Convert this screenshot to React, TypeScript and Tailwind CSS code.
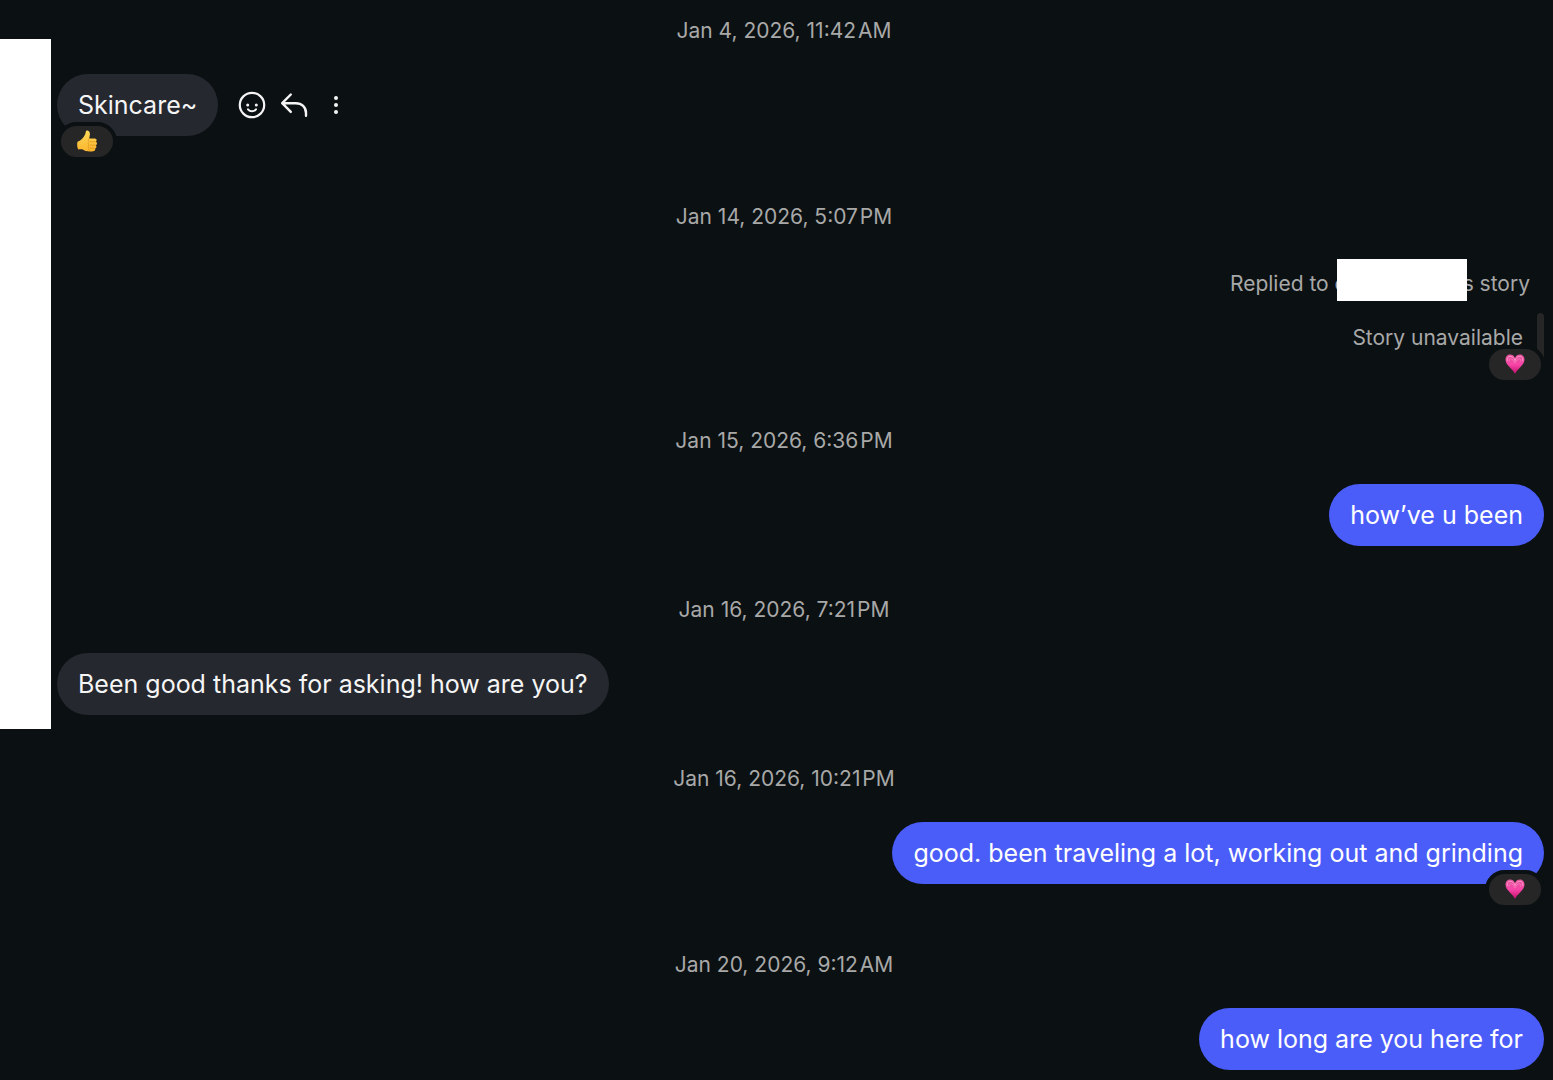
import type { ReactNode } from "react";

type Reaction = "thumbs" | "heart";

type Message = {
  id: string;
  date: string;
  from: "me" | "them";
  text?: string;
  storyReply?: boolean;
  reaction?: Reaction;
  showActions?: boolean;
};

const messages: Message[] = [
  {
    id: "1",
    date: "Jan 4, 2026, 11:42\u200aAM",
    from: "them",
    text: "Skincare~",
    reaction: "thumbs",
    showActions: true,
  },
  {
    id: "2",
    date: "Jan 14, 2026, 5:07\u200aPM",
    from: "me",
    storyReply: true,
    reaction: "heart",
  },
  {
    id: "3",
    date: "Jan 15, 2026, 6:36\u200aPM",
    from: "me",
    text: "how’ve u been",
  },
  {
    id: "4",
    date: "Jan 16, 2026, 7:21\u200aPM",
    from: "them",
    text: "Been good thanks for asking! how are you?",
  },
  {
    id: "5",
    date: "Jan 16, 2026, 10:21\u200aPM",
    from: "me",
    text: "good. been traveling a lot, working out and grinding",
    reaction: "heart",
  },
  {
    id: "6",
    date: "Jan 20, 2026, 9:12\u200aAM",
    from: "me",
    text: "how long are you here for",
  },
];

function ThumbsUp() {
  return (
    <svg viewBox="0 0 22 22" className="size-[22px]" aria-hidden="true">
      <defs>
        <linearGradient id="thumb" x1="0" y1="0" x2="0" y2="1">
          <stop offset="0" stopColor="#ffd95a" />
          <stop offset="1" stopColor="#fbb52c" />
        </linearGradient>
      </defs>
      <path
        d="M1.500 11.700C3.900 10.900 5.900 9.200 7.200 7.400c1.400-1.800 2.400-3.400 2.500-5.200.1-1.300.7-1.900 1.700-1.800 1.700.2 2.700 1.900 2.500 4.200-.1 1.500-.5 2.700-.8 3.800h5.500c1.200 0 2 .8 2 1.800 0 .7-.3 1.200-.8 1.500.8.300 1.200 1 1.200 1.800 0 .9-.5 1.500-1.200 1.800.5.300.7.900.6 1.600-.1.900-.7 1.500-1.400 1.600.3.300.3.700.2 1.100-.2 1-.9 1.500-1.900 1.600-2.400.4-5.100.4-7.400-.1-1.700-.4-2.600-1.500-4.200-1.800-1.100-.2-2.300 0-3.400.1C1 17.600.9 13.700 1.500 11.700Z"
        fill="url(#thumb)"
      />
      <path
        d="M14.200 11.700h5M14.200 15.100h5.200M14.200 18.200h4.200M13.200 8.400c-1 .8-1.200 2.300-.4 3.200-.8.900-.8 2.400 0 3.300-.8.900-.7 2.200.2 3-.4.800-.3 1.700.2 2.500"
        fill="none"
        stroke="#dd9218"
        strokeWidth=".7"
        strokeLinecap="round"
      />
    </svg>
  );
}

function Heart() {
  return (
    <svg viewBox="0 0 22 22" className="size-[22px]" aria-hidden="true">
      <defs>
        <linearGradient id="heart" x1="0" y1="0" x2="0" y2="1">
          <stop offset="0" stopColor="#e0559a" />
          <stop offset=".5" stopColor="#f747a8" />
          <stop offset="1" stopColor="#c4106f" />
        </linearGradient>
      </defs>
      <path
        d="M11 20.800C10.200 19 8.200 16.900 5.900 14.500 3.500 12 1.500 9.600 1.500 6.600c0-3 2-5 4.700-5 2.200 0 3.900 1.200 4.800 3.300.9-2.100 2.600-3.300 4.800-3.300 2.700 0 4.700 2 4.700 5 0 3-2 5.400-4.400 7.900-2.300 2.400-4.300 4.500-5.100 6.300Z"
        fill="url(#heart)"
      />
      <path
        d="M3.200 7.600c-.4-2.600.9-4.300 2.900-4.300 2.300 0 3.900 1.600 4.900 4.200 1-2.600 2.600-4.200 4.900-4.200 2 0 3.300 1.700 2.900 4.300"
        fill="none"
        stroke="#ff9ccb"
        strokeWidth=".9"
        strokeLinecap="round"
      />
      <path
        d="M5.200 8.200c-.2-1.500.3-2.500 1.300-2.500 1.700 0 3.300 1.900 4.500 4.200 1.200-2.300 2.800-4.200 4.500-4.200 1 0 1.500 1 1.300 2.500"
        fill="none"
        stroke="#ff86c2"
        strokeWidth=".7"
        strokeLinecap="round"
      />
    </svg>
  );
}

function ReactionPill({ reaction, side }: { reaction: Reaction; side: string }) {
  return (
    <button
      type="button"
      aria-label={`${reaction} reaction`}
      className={`absolute -bottom-[25px] flex h-[39px] w-[60px] items-center justify-center rounded-full border-4 border-[#0b1012] bg-[#262626] pb-0.5 ${side}`}
    >
      {reaction === "thumbs" ? <ThumbsUp /> : <Heart />}
    </button>
  );
}

function IconButton({ label, children }: { label: string; children: ReactNode }) {
  return (
    <button
      type="button"
      aria-label={label}
      className="flex size-[42px] items-center justify-center text-[#f5f5f5]"
    >
      {children}
    </button>
  );
}

function Actions() {
  return (
    <div className="ml-[13px] flex items-center">
      <IconButton label="React">
        <svg viewBox="0 0 28 28" className="size-7" fill="none" stroke="currentColor">
          <circle cx="14" cy="14" r="12.200" strokeWidth="2.200" />
          <circle cx="9.700" cy="14" r="1.500" fill="currentColor" stroke="none" />
          <circle cx="18.300" cy="14" r="1.500" fill="currentColor" stroke="none" />
          <path d="M10 18.300c1 1.300 2.400 1.900 4 1.900s3-.6 4-1.900" strokeWidth="2" strokeLinecap="round" />
        </svg>
      </IconButton>
      <IconButton label="Reply">
        <svg
          viewBox="0 0 28 28"
          className="size-7"
          fill="none"
          stroke="currentColor"
          strokeWidth="2.400"
          strokeLinecap="round"
          strokeLinejoin="round"
        >
          <path d="M10.800 3.500 2.200 12.200l8.600 8.700M2.200 12.200h13.600c6 0 10.200 4 10.200 9.800v2.800" />
        </svg>
      </IconButton>
      <IconButton label="More options">
        <svg viewBox="0 0 28 28" className="size-7" fill="currentColor">
          <circle cx="14" cy="7" r="2" />
          <circle cx="14" cy="14" r="2" />
          <circle cx="14" cy="21" r="2" />
        </svg>
      </IconButton>
    </div>
  );
}

function StoryReply({ children }: { children: ReactNode }) {
  return (
    <div className="-mt-px flex flex-col items-end text-[21px] leading-7 text-[#a8a8a8]">
      <div className="mr-3.5 flex items-end">
        <span className="pb-[3px]">Replied to c</span>
        {/* redacted username */}
        <span className="z-10 -ml-2.5 -mr-1 h-[42px] w-[130px] bg-white" />
        <span className="pb-[3px]">s story</span>
      </div>
      <div className="relative mt-3 flex h-[46px]">
        <span className="mr-3.5 pt-[11px]">Story unavailable</span>
        <span className="w-[7px] rounded-full bg-[#262626]" />
        {children}
      </div>
    </div>
  );
}

function MessageRow({ message }: { message: Message }) {
  const mine = message.from === "me";

  return (
    <li className={message.reaction ? "mb-[17px]" : ""}>
      <p className="pb-[29px] pr-9 text-center text-[21px] leading-7 text-[#a8a8a8]">
        {message.date}
      </p>
      {message.storyReply ? (
        <div className="pb-px pr-[9px]">
          <StoryReply>
            {message.reaction && (
              <ReactionPill reaction={message.reaction} side="-right-px" />
            )}
          </StoryReply>
        </div>
      ) : (
        <div className={`flex items-center pl-1.5 pr-[9px] ${mine ? "justify-end" : ""}`}>
          <div
            className={`relative rounded-[31px] px-[21px] py-[14px] text-[25px] leading-[34px] ${
              mine ? "bg-[#4a5df9] text-white" : "bg-[#25282f] text-[#f5f5f5]"
            }`}
          >
            {message.text}
            {message.reaction && (
              <ReactionPill
                reaction={message.reaction}
                side={mine ? "-right-px" : "left-0"}
              />
            )}
          </div>
          {message.showActions && <Actions />}
        </div>
      )}
    </li>
  );
}

export default function App() {
  return (
    <main className="flex min-h-screen items-start bg-[#0b1012] font-['Inter',sans-serif]">
      <div className="mt-[39px] h-[690px] w-[51px] shrink-0 bg-white" />
      <ul className="flex min-w-0 flex-1 flex-col gap-[50px] pb-[10px] pt-[17px]">
        {messages.map((message) => (
          <MessageRow key={message.id} message={message} />
        ))}
      </ul>
    </main>
  );
}
